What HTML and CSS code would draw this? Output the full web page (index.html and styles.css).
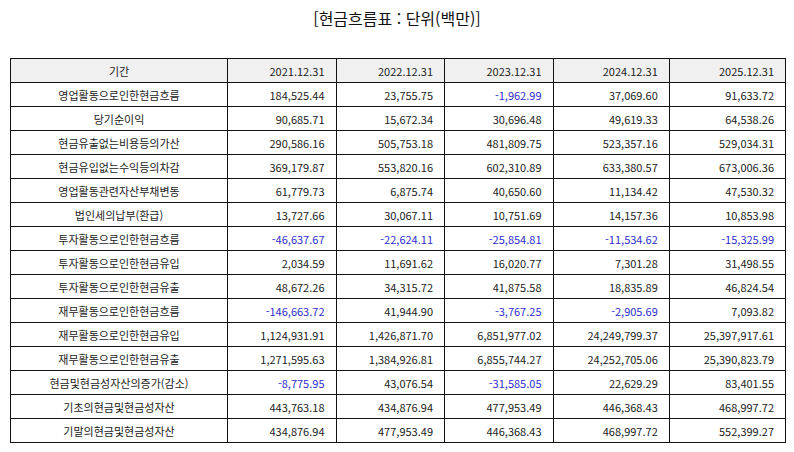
FILE: index.html
```html
<!DOCTYPE html>
<html lang="ko">
<head>
<meta charset="utf-8">
<link rel="stylesheet" href="styles.css">
</head>
<body>
<h1 class="title">[현금흐름표 : 단위(백만)]</h1>
<table class="cf">
  <colgroup>
    <col class="c-label"><col class="c-y"><col class="c-y"><col class="c-y"><col class="c-y2"><col class="c-y2">
  </colgroup>
  <thead>
    <tr><th>기간</th><th>2021.12.31</th><th>2022.12.31</th><th>2023.12.31</th><th>2024.12.31</th><th>2025.12.31</th></tr>
  </thead>
  <tbody>
    <tr><td>영업활동으로인한현금흐름</td><td>184,525.44</td><td>23,755.75</td><td class="neg">-1,962.99</td><td>37,069.60</td><td>91,633.72</td></tr>
    <tr><td>당기순이익</td><td>90,685.71</td><td>15,672.34</td><td>30,696.48</td><td>49,619.33</td><td>64,538.26</td></tr>
    <tr><td>현금유출없는비용등의가산</td><td>290,586.16</td><td>505,753.18</td><td>481,809.75</td><td>523,357.16</td><td>529,034.31</td></tr>
    <tr><td>현금유입없는수익등의차감</td><td>369,179.87</td><td>553,820.16</td><td>602,310.89</td><td>633,380.57</td><td>673,006.36</td></tr>
    <tr><td>영업활동관련자산부채변동</td><td>61,779.73</td><td>6,875.74</td><td>40,650.60</td><td>11,134.42</td><td>47,530.32</td></tr>
    <tr><td>법인세의납부(환급)</td><td>13,727.66</td><td>30,067.11</td><td>10,751.69</td><td>14,157.36</td><td>10,853.98</td></tr>
    <tr><td>투자활동으로인한현금흐름</td><td class="neg">-46,637.67</td><td class="neg">-22,624.11</td><td class="neg">-25,854.81</td><td class="neg">-11,534.62</td><td class="neg">-15,325.99</td></tr>
    <tr><td>투자활동으로인한현금유입</td><td>2,034.59</td><td>11,691.62</td><td>16,020.77</td><td>7,301.28</td><td>31,498.55</td></tr>
    <tr><td>투자활동으로인한현금유출</td><td>48,672.26</td><td>34,315.72</td><td>41,875.58</td><td>18,835.89</td><td>46,824.54</td></tr>
    <tr><td>재무활동으로인한현금흐름</td><td class="neg">-146,663.72</td><td>41,944.90</td><td class="neg">-3,767.25</td><td class="neg">-2,905.69</td><td>7,093.82</td></tr>
    <tr><td>재무활동으로인한현금유입</td><td>1,124,931.91</td><td>1,426,871.70</td><td>6,851,977.02</td><td>24,249,799.37</td><td>25,397,917.61</td></tr>
    <tr><td>재무활동으로인한현금유출</td><td>1,271,595.63</td><td>1,384,926.81</td><td>6,855,744.27</td><td>24,252,705.06</td><td>25,390,823.79</td></tr>
    <tr><td>현금및현금성자산의증가(감소)</td><td class="neg">-8,775.95</td><td>43,076.54</td><td class="neg">-31,585.05</td><td>22,629.29</td><td>83,401.55</td></tr>
    <tr><td>기초의현금및현금성자산</td><td>443,763.18</td><td>434,876.94</td><td>477,953.49</td><td>446,368.43</td><td>468,997.72</td></tr>
    <tr><td>기말의현금및현금성자산</td><td>434,876.94</td><td>477,953.49</td><td>446,368.43</td><td>468,997.72</td><td>552,399.27</td></tr>
  </tbody>
</table>
</body>
</html>
```
FILE: styles.css
```css
html, body {
  margin: 0;
  padding: 0;
  background: #ffffff;
}
body {
  font-family: "Noto Sans CJK KR", "Noto Sans", sans-serif;
  color: #222222;
  padding: 7px 0 0 10px;
}
.title {
  margin: 0 0 0 -10px;
  height: 51px;
  font-size: 16px;
  font-weight: normal;
  line-height: 22px;
  text-align: center;
  color: #111111;
}
.cf {
  width: 776px;
  border-collapse: collapse;
  table-layout: fixed;
  font-size: 11px;
}
.c-label { width: 28%; }
.c-y { width: 14%; }
.c-y2 { width: 15%; }
.cf th, .cf td {
  border: 1px solid #111111;
  height: 23px;
  padding: 0 11px;
  line-height: 14px;
  white-space: nowrap;
}
.cf th {
  background: #f0f0f0;
  font-weight: normal;
  text-align: right;
}
.cf th:first-child { text-align: center; }
.cf td { text-align: right; }
.cf td:first-child { text-align: center; }
.cf td.neg { color: #2e2ecf; }
```
